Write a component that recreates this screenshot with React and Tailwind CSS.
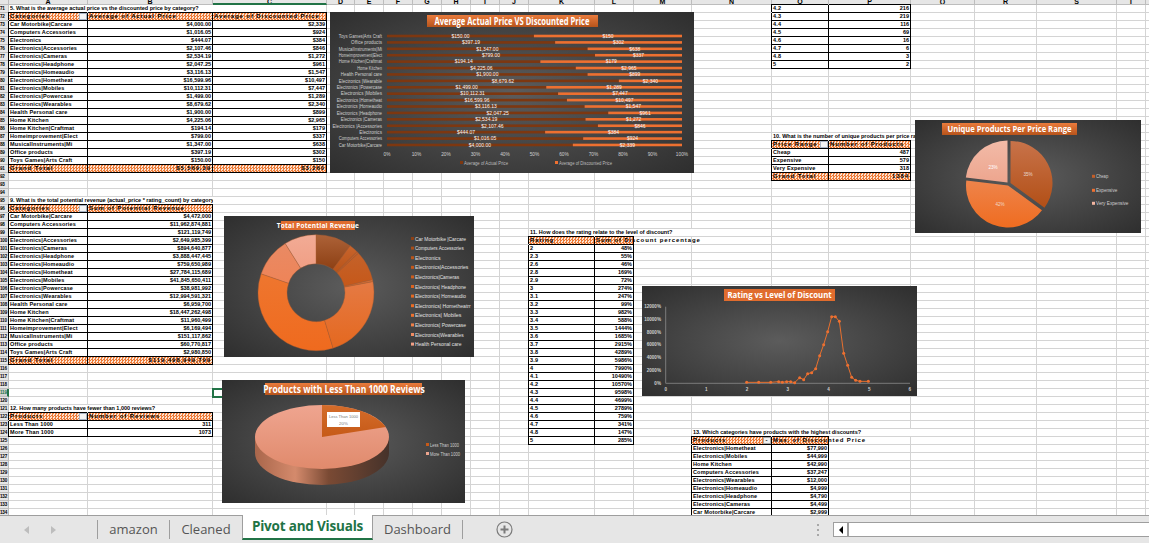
import React from "react";

const COLS = 22;
const FIRST = 71, LAST = 134;
const cells = {};
const covered = {};
const put = (r, c, o) => { cells[r + ":" + c] = o; };

function table({ row, col, q, qspan, head, rows, total, filter, dash, openTop }) {
  let r = row;
  if (q) {
    put(r, col, { t: q, kind: "q", span: qspan });
    for (let i = 1; i < qspan; i++) covered[r + ":" + (col + i)] = true;
    r++;
  }
  if (head) {
    head.forEach((h, i) => put(r, col + i, { t: h, kind: "hdr", left: i === 0, top: true, filter: i === 0 && filter, dash: i === 0 && dash }));
    r++;
  }
  rows.forEach((row2, ri) => {
    row2.forEach((v, i) => put(r, col + i, { t: v, kind: "body", right: i > 0, left: i === 0, top: openTop && ri === 0 }));
    r++;
  });
  if (total) {
    total.forEach((v, i) => put(r, col + i, { t: v, kind: "hdr", right: i > 0, left: i === 0 }));
  }
}

const cats = ["Car Motorbike|Carcare", "Computers Accessories", "Electronics", "Electronics|Accessories", "Electronics|Cameras", "Electronics|Headphone", "Electronics|Homeaudio", "Electronics|Hometheat", "Electronics|Mobiles", "Electronics|Powercase", "Electronics|Wearables", "Health Personal care", "Home Kitchen", "Home Kitchen|Craftmat", "Homeimprovement|Elect", "MusicalInstruments|Mi", "Office products", "Toys Games|Arts Craft"];
const actual = ["$4,000.00", "$1,016.05", "$444.07", "$2,107.46", "$2,534.19", "$2,047.25", "$3,116.13", "$16,599.96", "$10,112.31", "$1,499.00", "$8,679.62", "$1,900.00", "$4,225.06", "$194.14", "$799.00", "$1,347.00", "$397.19", "$150.00"];
const disc = ["$2,339", "$924", "$384", "$846", "$1,272", "$961", "$1,547", "$10,497", "$7,447", "$1,289", "$2,340", "$899", "$2,965", "$179", "$337", "$638", "$302", "$150"];
const rev = ["$4,472,000", "$11,962,874,881", "$121,119,749", "$2,649,985,399", "$894,640,877", "$3,888,447,445", "$759,650,989", "$27,784,115,689", "$41,845,650,411", "$38,981,992", "$12,994,591,321", "$6,959,700", "$18,447,262,498", "$11,960,499", "$6,169,494", "$151,117,862", "$60,770,817", "$2,980,850"];

table({ row: 71, col: 1, q: "5. What is the average actual price vs the discounted price by category?", qspan: 2, head: ["Categories", "Average of Actual Price", "Average of Discounted Price"], rows: cats.map((c, i) => [c, actual[i], disc[i]]), total: ["Grand Total", "$5,569.39", "$3,260"], filter: true });
table({ row: 95, col: 1, q: "9. What is the total potential revenue (actual_price * rating_count) by category?", qspan: 2, head: ["Categories", "Sum of Potential Revenue"], rows: cats.map((c, i) => [c, rev[i]]), total: ["Grand Total", "$119,498,949,799"], filter: true });
table({ row: 121, col: 1, q: "12. How many products have fewer than 1,000 reviews?", qspan: 2, head: ["Products", "Number of Reviews"], rows: [["Less Than 1000", "311"], ["More Than 1000", "1073"]], filter: true });
table({ row: 71, col: 15, rows: [["4.2", "216"], ["4.3", "219"], ["4.4", "116"], ["4.5", "69"], ["4.6", "16"], ["4.7", "6"], ["4.8", "3"], ["5", "2"]], openTop: true });
table({ row: 87, col: 15, q: "10. What is the number of unique products per price range?", qspan: 3, head: ["Price Range", "Number of Products"], rows: [["Cheap", "487"], ["Expensive", "579"], ["Very Expensive", "318"]], total: ["Grand Total", "1384"], filter: true });
const ratings = ["2", "2.3", "2.6", "2.8", "2.9", "3", "3.1", "3.2", "3.3", "3.4", "3.5", "3.6", "3.7", "3.8", "3.9", "4", "4.1", "4.2", "4.3", "4.4", "4.5", "4.6", "4.7", "4.8", "5"];
const rp = ["48%", "55%", "46%", "169%", "72%", "274%", "247%", "99%", "982%", "588%", "1444%", "1685%", "2915%", "4289%", "5986%", "7990%", "10490%", "10570%", "9598%", "4699%", "2789%", "759%", "341%", "147%", "285%"];
table({ row: 99, col: 11, q: "11. How does the rating relate to the level of discount?", qspan: 3, head: ["Rating", "Sum of Discount percentage"], rows: ratings.map((x, i) => [x, rp[i]]) });
table({ row: 124, col: 14, q: "13. Which categories have products with the highest discounts?", qspan: 3, head: ["Products", "Max. of Discounted Price"], rows: [["Electronics|Hometheat", "$77,990"], ["Electronics|Mobiles", "$44,999"], ["Home Kitchen", "$42,990"], ["Computers Accessories", "$37,247"], ["Electronics|Wearables", "$12,000"], ["Electronics|Homeaudio", "$4,999"], ["Electronics|Headphone", "$4,790"], ["Electronics|Cameras", "$4,499"], ["Car Motorbike|Carcare", "$2,999"]], dash: true });

function Cell({ r, c }) {
  const o = cells[r + ":" + c];
  if (!o) {
    if (r === 119 && c === 3) return <div className="relative border-r border-b border-[#d4d4d4] outline-2 -outline-offset-1 outline-[#217346]" />;
    return <div className="border-r border-b border-[#d4d4d4]" />;
  }
  if (o.kind === "q") {
    return (
      <div style={{ gridColumn: "span " + o.span }} className="overflow-hidden whitespace-nowrap border-b border-[#d4d4d4] pl-[1px] text-[5.5px] leading-[7px] font-bold text-black">
        {o.t}
      </div>
    );
  }
  const sh = o.top && o.left ? "shadow-[-1px_-1px_0_#000]" : o.top ? "shadow-[0_-1px_0_#000]" : o.left ? "shadow-[-1px_0_0_#000]" : "";
  if (o.kind === "hdr") {
    return (
      <div className={"relative whitespace-nowrap border-r border-b border-black bg-[repeating-conic-gradient(#ee7a36_0_25%,#fbe3d2_0_50%)] bg-[length:3px_3px] text-[6px] leading-[7px] font-extrabold text-black tracking-[0.9px] " + sh + (o.right ? " text-right pr-[1px]" : " pl-[1px]")}>
        {o.t}
        {o.filter && <span className="absolute right-0 top-0 h-[7px] w-[8px] border border-[#a9b4c4] bg-[#f4f4f4]" />}
        {o.dash && <span className="absolute right-0 top-0 flex h-[7px] w-[8px] items-center justify-center border border-[#a9a9a9] bg-[#f0f0f0] leading-[5px]">-</span>}
      </div>
    );
  }
  return (
    <div className={"whitespace-nowrap border-r border-b border-black text-[5.5px] leading-[7px] font-bold text-black " + sh + (o.right ? " text-right pr-[1px]" : " pl-[1px] tracking-[0.15px]")}>
      {o.t}
    </div>
  );
}

const LETTERS = ["", "A", "B", "C", "D", "E", "F", "G", "H", "I", "J", "K", "L", "M", "N", "O", "P", "Q", "R", "S", "T", "U"];

function Sheet() {
  const out = [];
  for (let c = 0; c < COLS; c++) {
    out.push(
      <div key={"h" + c} className={"overflow-hidden border-r border-b border-[#bdbdbd] bg-[#e6e6e6] text-center text-[7px] leading-[3px] font-bold text-black" + (c === 3 ? " border-b-2 border-b-[#217346]" : "")}>
        {LETTERS[c]}
      </div>
    );
  }
  for (let r = FIRST; r <= LAST; r++) {
    out.push(
      <div key={"r" + r} className={"overflow-hidden whitespace-nowrap border-b border-[#bdbdbd] text-[4.6px] leading-[7px] font-bold tracking-[-0.2px] " + (r === 119 ? "border-r-2 border-r-[#217346] bg-[#d2d2d2] text-[#217346]" : "border-r border-r-[#bdbdbd] bg-[#e6e6e6] text-black")}>
        {r}
      </div>
    );
    for (let c = 1; c < COLS; c++) {
      const k = r + ":" + c;
      if (covered[k]) continue;
      out.push(<Cell key={k} r={r} c={c} />);
    }
  }
  return (
    <div className="grid grid-cols-[9px_79px_125px_114px_28px_29px_29px_29px_29px_29px_29px_66px_39px_58px_80px_57px_82px_64px_62px_80px_29px_20px] grid-rows-[5px] auto-rows-[8px] font-['Liberation_Sans',sans-serif]">
      {out}
    </div>
  );
}

const T = ({ x, y, s = 5.5, f = "#dcdcdc", a = "start", w, b, children }) => (
  <text x={x} y={y} fontSize={s} fill={f} textAnchor={a} fontWeight={b ? 700 : 400} fontFamily="'Liberation Sans',sans-serif" textLength={w} lengthAdjust={w ? "spacingAndGlyphs" : undefined}>
    {children}
  </text>
);

const Title = ({ className, inner, children }) => (
  <div className={"relative z-10 flex items-center justify-center whitespace-nowrap bg-gradient-to-b from-[#ea7b3c] to-[#b7541b] font-['Open_Sans',sans-serif] font-bold text-white " + className}>
    <span className={inner}>{children}</span>
  </div>
);

const CHARTBG = "absolute overflow-hidden bg-[radial-gradient(ellipse_at_center,#5c5c5c_0%,#2e2e2e_100%)] ";

const barCats = ["Toys Games|Arts Craft", "Office products", "MusicalInstruments|Mi", "Homeimprovement|Elect", "Home Kitchen|Craftmat", "Home Kitchen", "Health Personal care", "Electronics |Wearable", "Electronics |Powercase", "Electronics |Mobiles", "Electronics |Hometheat", "Electronics |Homeaudio", "Electronics |Headphone", "Electronics |Cameras", "Electronics |Accessories", "Electronics", "Computers Accessories", "Car Motorbike|Carcare"];
const split = [49.8, 57, 68, 70.5, 52, 64, 68, 78.6, 54, 58, 61, 67, 75, 67.3, 71.5, 53.6, 66.5, 63];

function BarChart() {
  const x0 = 57, W = 295;
  return (
    <div className={CHARTBG + "left-[330px] top-[12px] h-[161px] w-[364px] pt-[3px]"}>
      <Title className="mx-auto h-[12px] w-[171px] text-[10px]" inner="inline-block scale-x-[0.76]">Average Actual Price VS Discounted Price</Title>
      <svg className="absolute inset-0 h-full w-full" viewBox="0 0 364 161">
        {barCats.map((c, i) => {
          const y = 24 + i * 6.41;
          const m = x0 + (W * split[i]) / 100;
          return (
            <g key={c}>
              <T x={52} y={y + 1.8} a="end" s={5} f="#cfcfcf" w={c.length * 2.06}>{c}</T>
              <rect x={x0} y={y - 1.3} width={m - x0} height={2.6} fill="#7d3710" />
              <rect x={m} y={y - 1.3} width={x0 + W - m} height={2.6} fill="#ee7030" />
              <T x={(x0 + m) / 2} y={y + 1.8} a="middle" s={5} f="#f6f6f6">{actual[17 - i]}</T>
              <T x={(m + x0 + W) / 2} y={y + 1.8} a="middle" s={5} f="#f6f6f6">{disc[17 - i]}</T>
            </g>
          );
        })}
        {[0, 10, 20, 30, 40, 50, 60, 70, 80, 90, 100].map((p) => (
          <T key={p} x={x0 + (W * p) / 100} y={144} a="middle" s={4.8} f="#cfcfcf">{p + "%"}</T>
        ))}
        <rect x={130} y={149} width={3} height={3} fill="#7d3710" />
        <T x={134} y={152.5} s={4.8} f="#bdbdbd" w={44}>Average of Actual Price</T>
        <rect x={225} y={149} width={3} height={3} fill="#ee7030" />
        <T x={229} y={152.5} s={4.8} f="#bdbdbd" w={53}>Average of Discounted Price</T>
      </svg>
    </div>
  );
}

const pt = (cx, cy, r, a) => [cx + r * Math.sin((a * Math.PI) / 180), cy - r * Math.cos((a * Math.PI) / 180)];
const ring = (cx, cy, R, r0, a, b) => {
  const [x1, y1] = pt(cx, cy, R, a), [x2, y2] = pt(cx, cy, R, b);
  const [x3, y3] = pt(cx, cy, r0, b), [x4, y4] = pt(cx, cy, r0, a);
  const l = b - a > 180 ? 1 : 0;
  return `M${x1} ${y1}A${R} ${R} 0 ${l} 1 ${x2} ${y2}L${x3} ${y3}A${r0} ${r0} 0 ${l} 0 ${x4} ${y4}Z`;
};
const wedge = (cx, cy, R, a, b) => {
  const [x1, y1] = pt(cx, cy, R, a), [x2, y2] = pt(cx, cy, R, b);
  const l = b - a > 180 ? 1 : 0;
  return `M${cx} ${cy}L${x1} ${y1}A${R} ${R} 0 ${l} 1 ${x2} ${y2}Z`;
};
const Grad = ({ id, a, b, h }) => (
  <linearGradient id={id} x1="0" y1="0" x2={h ? 1 : 0} y2={h ? 0 : 1}>
    <stop offset="0" stopColor={a} />
    <stop offset="1" stopColor={b} />
  </linearGradient>
);

const donut = [
  [0, 36, "#ad6238", "#8d4014"], [36, 45, "#c9642c", "#b7541a"], [45, 47, "#c4602a", "#c05a20"], [47, 77, "#c4622a", "#c6581a"], [77, 79, "#d2703c", "#cc6426"],
  [79, 163, "#e57a44", "#e4681f"], [163, 289, "#ee762f", "#ef6a1e"], [289, 328, "#e98a64", "#ee8458"], [328, 360, "#f2ab95", "#f09f85"],
];
const donutLegend = [["Car Motorbike |Carcare", "#8d4014"], ["Computers Accessories", "#a84d18"], ["Electronics", "#b7541a"], ["Electronics|Accessories", "#c4581a"], ["Electronics|Cameras", "#cc5e1e"], ["Electronics| Headphone", "#dc6420"], ["Electronics| Homeaudio", "#e46a22"], ["Electronics| Hometheatrr", "#ec6d24"], ["Electronics| Mobiles", "#ee7230"], ["Electronics| Powercase", "#ee8048"], ["Electronics|Wearables", "#ef8c62"], ["Health Personal care", "#f09f85"]];

function Donut() {
  return (
    <div className={CHARTBG + "left-[224px] top-[216px] h-[141px] w-[250px] pt-[5px]"}>
      <Title className="ml-[57px] h-[9px] w-[74px] bg-none bg-[#e06c2e] text-[6.5px] tracking-[0.2px]">Total Potential Revenue</Title>
      <svg className="absolute inset-0 h-full w-full" viewBox="0 0 250 141">
        <defs>{donut.map((d, i) => <Grad key={i} id={"d" + i} a={d[2]} b={d[3]} />)}</defs>
        {donut.map((d, i) => <path key={i} d={ring(92, 76.7, 58, 29, d[0], d[1])} fill={`url(#d${i})`} stroke="#a85a30" strokeWidth="0.4" />)}
        {donutLegend.map(([t, c], i) => (
          <g key={t}>
            <rect x={187} y={21 + i * 9.6} width={3} height={3} fill={c} />
            <T x={191} y={24.5 + i * 9.6} s={4.8} f="#e2e2e2" w={t.length * 2.32}>{t}</T>
          </g>
        ))}
      </svg>
    </div>
  );
}

const lineZ = [[650, 487], [686, 487], [722, 487], [746, 485], [757, 487], [770, 485], [782, 485], [794, 488], [809, 473], [821, 479], [833, 461], [845, 458], [857, 446], [869, 407], [881, 374], [893, 335], [905, 290], [916, 290], [928, 304], [941, 400], [953, 436], [965, 472], [977, 481], [990, 484], [1015, 484]].map(([x, y]) => [x / 3 + 530 - 642, y / 3 + 220 - 286]);

function LineChart() {
  const x0 = 23.7, y0 = 97.3;
  return (
    <div className={CHARTBG + "left-[642px] top-[286px] h-[110px] w-[275px] pt-[3px]"}>
      <Title className="mx-auto h-[12px] w-[111px] bg-none bg-[#e06c2e] text-[9.5px]" inner="inline-block scale-x-[0.82]">Rating vs Level of Discount</Title>
      <svg className="absolute inset-0 h-full w-full" viewBox="0 0 275 110">
        <path d={`M${x0} 20.7V${y0}H268`} fill="none" stroke="#8c8c8c" strokeWidth="0.8" />
        {["0%", "2000%", "4000%", "6000%", "8000%", "10000%", "12000%"].map((l, i) => (
          <T key={l} x={19} y={y0 + 1.5 - i * 12.77} a="end" s={4.6} f="#cfcfcf" b>{l}</T>
        ))}
        {[0, 1, 2, 3, 4, 5, 6].map((v) => <T key={v} x={x0 + v * 40.7} y={105} a="middle" s={4.6} f="#cfcfcf" b>{v}</T>)}
        <polyline points={lineZ.map((p) => p.join(",")).join(" ")} fill="none" stroke="#e8702e" strokeWidth="1" />
        {lineZ.map((p, i) => <circle key={i} cx={p[0]} cy={p[1]} r="1.5" fill="#ee7030" />)}
      </svg>
    </div>
  );
}

function Pie() {
  return (
    <div className={CHARTBG + "left-[915px] top-[120px] h-[113px] w-[226px] pt-[3px]"}>
      <Title className="ml-[27px] h-[12px] w-[135px] text-[9.5px]" inner="inline-block scale-x-[0.8]">Unique Products Per Price Range</Title>
      <svg className="absolute inset-0 h-full w-full" viewBox="0 0 226 113">
        <defs>
          <Grad id="p1" a="#c8734a" b="#b24f16" />
          <Grad id="p2" a="#ee844b" b="#ef6c20" />
          <Grad id="p3" a="#f2bba8" b="#eda58e" />
        </defs>
        <path d={wedge(95.5, 63, 42, 0, 126)} fill="url(#p1)" />
        <path d={wedge(93, 65.5, 42, 126, 277)} fill="url(#p2)" />
        <path d={wedge(92.5, 62.5, 42, 277, 360)} fill="url(#p3)" />
        <T x={113} y={56} a="middle" s={4.6} f="#e8d8d0">35%</T>
        <T x={85} y={86} a="middle" s={4.6} f="#f0d8c8">42%</T>
        <T x={78} y={49} a="middle" s={4.6} f="#fff">23%</T>
        {[["Cheap", 56.3, "#c45f28"], ["Expensive", 70.3, "#ee7030"], ["Very Expensive", 83.3, "#f2b5a0"]].map(([t, y, c]) => (
          <g key={t}>
            <rect x={177} y={y - 1.5} width={3} height={3} fill={c} />
            <T x={181} y={y + 2} s={4.8} f="#cfcfcf" w={t.length * 2.25 + 1}>{t}</T>
          </g>
        ))}
      </svg>
    </div>
  );
}

function Pie3D() {
  const cx = 100, cy = 57, rx = 67, ry = 32, d = 16;
  const [wx, wy] = [cx + rx * Math.sin(1.257), cy - ry * Math.cos(1.257)];
  return (
    <div className={CHARTBG + "left-[222px] top-[380px] h-[123px] w-[243px] pt-[3px]"}>
      <Title className="mx-auto h-[12px] w-[157px] text-[10px]" inner="inline-block scale-x-[0.85]">Products with Less Than 1000 Reviews</Title>
      <svg className="absolute inset-0 h-full w-full" viewBox="0 0 243 123">
        <defs>
          <linearGradient id="s3" x1="0" y1="0" x2="1" y2="0">
            <stop offset="0" stopColor="#a9664b" />
            <stop offset="0.3" stopColor="#d48a6c" />
            <stop offset="0.55" stopColor="#7a4a34" />
            <stop offset="1" stopColor="#46322a" />
          </linearGradient>
          <Grad id="t3" a="#efa590" b="#e08a6c" />
          <Grad id="w3" a="#d46c2a" b="#c65a18" />
        </defs>
        <path d={`M${cx - rx} ${cy}V${cy + d}A${rx} ${ry} 0 0 0 ${cx + rx} ${cy + d}V${cy}Z`} fill="url(#s3)" />
        <ellipse cx={cx} cy={cy} rx={rx} ry={ry} fill="url(#t3)" />
        <path d={`M${cx} ${cy}V${cy - ry}A${rx} ${ry} 0 0 1 ${wx} ${wy}Z`} fill="url(#w3)" />
        <rect x={105} y={32} width={33} height={15} fill="#fff" />
        <T x={121.5} y={38} a="middle" s={4.4} f="#777" w={29}>Less Than 1000</T>
        <T x={121.5} y={45} a="middle" s={4.4} f="#777">20%</T>
        <rect x={204} y={63} width={3} height={3} fill="#c65a18" />
        <T x={208} y={67} s={4.6} f="#cfcfcf" w={29}>Less Than 1000</T>
        <rect x={204} y={72} width={3} height={3} fill="#eda58e" />
        <T x={208} y={76} s={4.6} f="#cfcfcf" w={30}>More Than 1000</T>
      </svg>
    </div>
  );
}

function TabBar() {
  const tab = "mt-[4px] flex h-[19px] items-center justify-center border-r border-[#9e9e9e] font-['Open_Sans',sans-serif] text-[13px] text-[#555]";
  return (
    <div className="relative z-20 flex h-[28px] shrink-0 items-start border-t border-[#9e9e9e] bg-[#e6e6e6]">
      <div className="mt-[4px] flex h-[19px] w-[98px] items-center gap-[22px] border-r border-[#9e9e9e] pl-[24px]">
        <span className="h-0 w-0 border-y-[4px] border-r-[5px] border-y-transparent border-r-[#bdbdbd]" />
        <span className="h-0 w-0 border-y-[4px] border-l-[5px] border-y-transparent border-l-[#bdbdbd]" />
      </div>
      <div className={tab + " w-[72px]"}>amazon</div>
      <div className={tab + " w-[72px] border-r-0"}>Cleaned</div>
      <div className="-mt-px flex h-[25px] w-[131px] items-center justify-center border-x border-[#9e9e9e] border-b-2 border-b-[#217346] bg-white font-['Open_Sans',sans-serif] text-[13.5px] font-bold tracking-[-0.2px] text-[#217346]">Pivot and Visuals</div>
      <div className={tab + " w-[90px]"}>Dashboard</div>
      <svg className="ml-[33px] mt-[5px] h-[17px] w-[17px]" viewBox="0 0 17 17" fill="none" stroke="#7b7b7b">
        <circle cx="8.5" cy="8.5" r="7.5" strokeWidth="1.2" />
        <path d="M4.5 8.5h8M8.5 4.5v8" strokeWidth="2" />
      </svg>
      <div className="ml-auto mt-[6px] flex w-[332px] items-center">
        <div className="mr-[14px] flex flex-col gap-[3px]">
          <span className="h-[2px] w-[2px] bg-[#a8a8a8]" />
          <span className="h-[2px] w-[2px] bg-[#a8a8a8]" />
          <span className="h-[2px] w-[2px] bg-[#a8a8a8]" />
        </div>
        <div className="flex h-[15px] flex-1 items-center border-y border-l border-[#9e9e9e] bg-white">
          <div className="flex h-full w-[15px] items-center justify-center border-r-2 border-[#9e9e9e]">
            <span className="h-0 w-0 border-y-[4px] border-r-[4px] border-y-transparent border-r-black" />
          </div>
        </div>
      </div>
    </div>
  );
}

export default function App() {
  return (
    <div className="flex h-[543px] w-[1149px] flex-col overflow-hidden bg-white">
      <div className="relative flex-1 overflow-hidden">
        <Sheet />
        <BarChart />
        <Donut />
        <LineChart />
        <Pie />
        <Pie3D />
      </div>
      <TabBar />
    </div>
  );
}
